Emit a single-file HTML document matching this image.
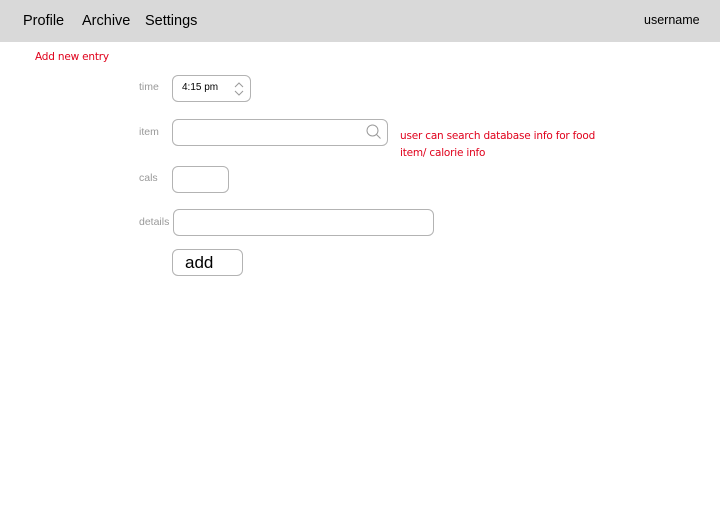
<!DOCTYPE html>
<html><head><style>
body{margin:0;width:720px;height:512px;background:#fff;position:relative;font-family:"Liberation Sans",sans-serif;overflow:hidden}
.nav{position:absolute;left:0;top:0;width:720px;height:42px;background:#d9d9d9}
.t{position:absolute;white-space:nowrap}
.n{font-size:14.5px;color:#000;top:13px}
.lbl{font-size:10.5px;color:#999}
.red{color:#e0001b;font-family:"DejaVu Sans",sans-serif;font-size:10.5px;letter-spacing:-0.2px}
.box{position:absolute;border:1px solid #b3b3b3;border-radius:6px;background:#fff;box-sizing:border-box}
</style></head><body>
<div class="nav"></div>
<div class="t n" style="left:23px">Profile</div>
<div class="t n" style="left:82px">Archive</div>
<div class="t n" style="left:145px">Settings</div>
<div class="t" style="left:644px;top:13px;font-size:12.5px">username</div>
<div class="t red" style="left:35px;top:51px">Add new entry</div>

<div class="t lbl" style="left:139px;top:81px">time</div>
<div class="box" style="left:172px;top:75px;width:79px;height:27px"></div>
<div class="t" style="left:182px;top:82px;font-size:10px">4:15 pm</div>
<svg style="position:absolute;left:233px;top:81px" width="12" height="16"><path d="M2 6L6 2L10 6M2 10L6 14L10 10" fill="none" stroke="#999" stroke-width="1"/></svg>

<div class="t lbl" style="left:139px;top:126px">item</div>
<div class="box" style="left:172px;top:119px;width:216px;height:27px"></div>
<svg style="position:absolute;left:365px;top:123px" width="18" height="18"><circle cx="7.5" cy="7.5" r="5.5" fill="none" stroke="#999" stroke-width="1"/><path d="M11.5 11.5L15.5 15.5" stroke="#999" stroke-width="1"/></svg>
<div class="t red" style="left:400px;top:128px;line-height:17px">user can search database info for food<br>item/ calorie info</div>

<div class="t lbl" style="left:139px;top:172px">cals</div>
<div class="box" style="left:172px;top:166px;width:57px;height:27px"></div>

<div class="t lbl" style="left:139px;top:216px">details</div>
<div class="box" style="left:173px;top:209px;width:261px;height:27px"></div>

<div class="box" style="left:172px;top:249px;width:71px;height:27px"></div>
<div class="t" style="left:185px;top:253px;font-size:17px">add</div>
</body></html>
